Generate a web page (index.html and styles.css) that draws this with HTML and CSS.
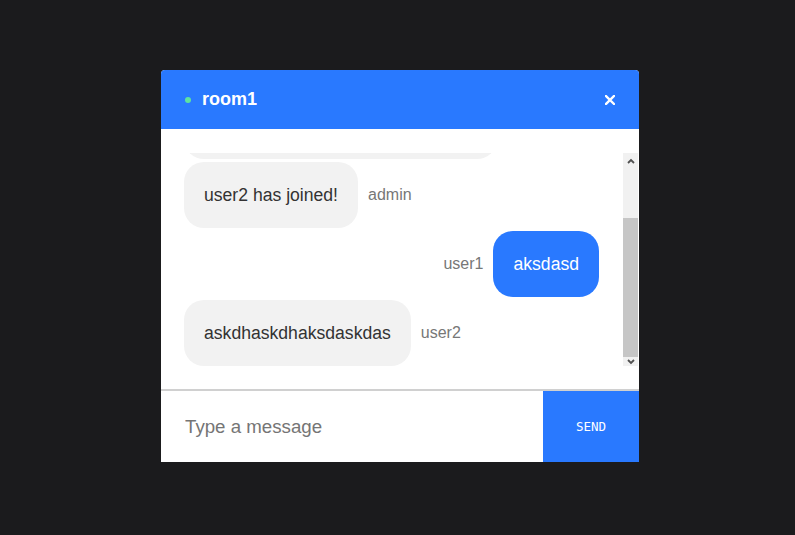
FILE: index.html
```html
<!DOCTYPE html>
<html>
<head>
<meta charset="utf-8">
<link rel="stylesheet" href="styles.css">
</head>
<body>
<div class="chat">
  <div class="header">
    <span class="dot"></span>
    <span class="title">room1</span>
    <span class="close"><svg width="10" height="10" viewBox="0 0 10 10"><path d="M1 1L9 9M9 1L1 9" stroke="#fff" stroke-width="2.4" stroke-linecap="square"/></svg></span>
  </div>
  <div class="body">
    <div class="messages">
      <div class="msg"><div class="bubble">Welcome to room1, user2! Enjoy it.</div></div>
      <div class="msg"><div class="bubble">user2 has joined!</div><span class="who">admin</span></div>
      <div class="msg mine"><span class="who">user1</span><div class="bubble">aksdasd</div></div>
      <div class="msg"><div class="bubble">askdhaskdhaksdaskdas</div><span class="who">user2</span></div>
    </div>
    <div class="scrollbar">
      <div class="sb-btn"><svg width="8" height="6" viewBox="0 0 8 6"><path d="M1 5L4 2L7 5" fill="none" stroke="#505050" stroke-width="1.8"/></svg></div>
      <div class="sb-track"></div>
      <div class="sb-thumb"></div>
      <div class="sb-btn sb-down"><svg width="8" height="6" viewBox="0 0 8 6"><path d="M1 1L4 4L7 1" fill="none" stroke="#505050" stroke-width="1.8"/></svg></div>
    </div>
  </div>
  <div class="composer">
    <input class="input" type="text" placeholder="Type a message">
    <button class="send">SEND</button>
  </div>
</div>
</body>
</html>
```
FILE: styles.css
```css
html, body {
  margin: 0;
  padding: 0;
}
body {
  background: #1b1b1d;
  min-height: 100vh;
  box-sizing: border-box;
  padding: 0 0 3px 5px;
  display: flex;
  align-items: center;
  justify-content: center;
  font-family: "Liberation Sans", Arial, sans-serif;
}
.chat {
  width: 478px;
  background: #fff;
  border-radius: 4px 4px 0 0;
  overflow: hidden;
  display: flex;
  flex-direction: column;
}
.header {
  height: 59px;
  background: #2979ff;
  display: flex;
  align-items: center;
  padding: 0 24px 0 24px;
}
.dot {
  width: 6px;
  height: 6px;
  border-radius: 50%;
  background: #5ee3a0;
  margin-right: 11px;
  margin-top: 1px;
}
.title {
  color: #fff;
  font-weight: bold;
  font-size: 18px;
  flex: 1;
}
.close {
  display: flex;
  margin-top: 1px;
}
.body {
  display: flex;
  padding: 24px 1px 23px 23px;
  border-bottom: 2px solid #d0d0d0;
}
.messages {
  flex: 1;
  height: 213px;
  overflow: hidden;
  display: flex;
  flex-direction: column;
  justify-content: flex-end;
  gap: 3px;
  padding-right: 24px;
}
.msg {
  display: flex;
  align-items: center;
  gap: 10px;
  flex-shrink: 0;
}
.msg.mine {
  justify-content: flex-end;
}
.bubble {
  background: #f2f2f2;
  color: #333;
  font-size: 17.6px;
  line-height: 20px;
  padding: 23px 20px;
  border-radius: 20px;
}
.mine .bubble {
  background: #2979ff;
  color: #fff;
}
.who {
  color: #777;
  font-size: 16px;
}
.scrollbar {
  width: 15px;
  display: flex;
  flex-direction: column;
  background: #f1f1f1;
}
.sb-btn {
  height: 15px;
  display: flex;
  align-items: center;
  justify-content: center;
}
.sb-down {
  height: 9px;
  align-items: flex-start;
  padding-top: 2px;
  box-sizing: border-box;
}
.sb-track {
  height: 50px;
}
.sb-thumb {
  height: 139px;
  background: #c6c6c6;
}
.composer {
  display: flex;
  height: 71px;
}
.input {
  flex: 1;
  border: none;
  outline: none;
  padding: 0 0 0 24px;
  margin: 0;
  font-family: "Liberation Sans", Arial, sans-serif;
  font-size: 18.7px;
  color: #333;
  background: #fff;
}
.input::placeholder {
  color: #757575;
}
.send {
  width: 96px;
  border: none;
  margin: 0;
  background: #2979ff;
  color: #fff;
  font-family: "DejaVu Sans Mono", monospace;
  font-size: 12.5px;
  padding: 0;
}
```
